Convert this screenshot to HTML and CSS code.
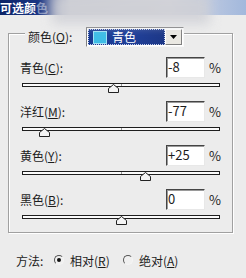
FILE: index.html
```html
<!DOCTYPE html>
<html>
<head>
<meta charset="utf-8">
<link rel="stylesheet" href="styles.css">
</head>
<body>
<div class="win">
  <div class="title">
    <span class="title-text">可选颜<span class="fade">色</span></span>
    <div class="blur"></div>
  </div>
  <div class="group">
    <div class="group-head">
      <span class="legend">颜色(<u>O</u>):</span>
      <div class="combo">
        <div class="combo-sel"><span class="swatch"></span><span class="combo-text">青色</span></div>
        <div class="combo-btn"><svg width="7" height="4" viewBox="0 0 7 4"><path d="M0 0h7L3.5 4z" fill="#000"/></svg></div>
      </div>
    </div>

    <div class="row first"><span class="label">青色(<u>C</u>):</span><span class="input">-8</span><span class="pct">%</span></div>
    <div class="slider"><div class="track"><span class="tick"></span></div><svg class="thumb" style="left:86px" width="11" height="9" viewBox="0 0 11 9"><path d="M0.5 8.5V4.5L5.5 0.5L10.5 4.5V8.5Z" fill="#f4f4f4" stroke="#222"/></svg></div>

    <div class="row"><span class="label">洋红(<u>M</u>):</span><span class="input">-77</span><span class="pct">%</span></div>
    <div class="slider"><div class="track"><span class="tick"></span></div><svg class="thumb" style="left:17px" width="11" height="9" viewBox="0 0 11 9"><path d="M0.5 8.5V4.5L5.5 0.5L10.5 4.5V8.5Z" fill="#f4f4f4" stroke="#222"/></svg></div>

    <div class="row"><span class="label">黄色(<u>Y</u>):</span><span class="input">+25</span><span class="pct">%</span></div>
    <div class="slider"><div class="track"><span class="tick"></span></div><svg class="thumb" style="left:118px" width="11" height="9" viewBox="0 0 11 9"><path d="M0.5 8.5V4.5L5.5 0.5L10.5 4.5V8.5Z" fill="#f4f4f4" stroke="#222"/></svg></div>

    <div class="row"><span class="label">黑色(<u>B</u>):</span><span class="input">0</span><span class="pct">%</span></div>
    <div class="slider"><div class="track"><span class="tick"></span></div><svg class="thumb" style="left:94px" width="11" height="9" viewBox="0 0 11 9"><path d="M0.5 8.5V4.5L5.5 0.5L10.5 4.5V8.5Z" fill="#f4f4f4" stroke="#222"/></svg></div>
  </div>

  <div class="method">
    <span class="m-label">方法:</span>
    <span class="radio checked"></span><span class="r-text">相对(<u>R</u>)</span>
    <span class="radio"></span><span class="r-text">绝对(<u>A</u>)</span>
  </div>
</div>
</body>
</html>
```
FILE: styles.css
```css
html, body {
  margin: 0;
  padding: 0;
  background: #ececec;
}
body {
  font-family: "Noto Sans CJK SC", "Noto Sans", sans-serif;
  font-size: 12px;
  color: #1c1c1c;
}
.win {
  width: 246px;
  height: 278px;
  overflow: hidden;
  background: #ececec;
}
u {
  text-decoration: underline;
  text-underline-offset: 1px;
}

/* title */
.title {
  position: relative;
  height: 15px;
  background: linear-gradient(to right, #0c2467 0, #1a3584 38px, #c9cad2 70px, #d9d9de 170px, #b8c6e0 212px, #a2b8dc 246px);
}
.title-text {
  display: block;
  line-height: 15px;
  font-size: 12px;
  font-weight: bold;
  color: #fff;
}
.fade {
  color: rgba(255,255,255,0.45);
}
.blur {
  position: absolute;
  left: 52px;
  top: -6px;
  width: 158px;
  height: 30px;
  background: #cfd0d6;
  filter: blur(6px);
  opacity: 0.85;
}

/* group */
.group {
  box-sizing: border-box;
  margin: 18px 0 0 8px;
  width: 225px;
  height: 200px;
  border: 1px solid #a0a0a0;
  box-shadow: 1px 1px 0 #fff, inset 1px 1px 0 #fff;
}
.group-head {
  display: flex;
  align-items: center;
  height: 20px;
  margin-top: -7px;
  padding-left: 16px;
}
.legend {
  box-sizing: border-box;
  width: 61px;
  padding-left: 3px;
  background: #ececec;
  line-height: 14px;
  white-space: nowrap;
}
.combo {
  box-sizing: border-box;
  display: flex;
  width: 98px;
  height: 20px;
  border: 1px solid;
  border-color: #808080 #f8f8f8 #f8f8f8 #808080;
  background: #fff;
  padding: 1px;
}
.combo-sel {
  flex: 1;
  display: flex;
  align-items: center;
  background: linear-gradient(to right, #183a92, #203f98 60%, #1c3786);
  outline: 1px dotted #c8d0e8;
  outline-offset: -1px;
}
.swatch {
  box-sizing: border-box;
  width: 14px;
  height: 13px;
  margin-left: 5px;
  background: #3fbde6;
  border: 1px solid #9fe0f4;
}
.combo-text {
  margin-left: 5px;
  color: #fff;
  line-height: 14px;
}
.combo-btn {
  box-sizing: border-box;
  width: 17px;
  display: flex;
  align-items: center;
  justify-content: center;
  background: #eae8e2;
  border: 1px solid;
  border-color: #fff #808080 #808080 #fff;
}

/* rows */
.row {
  display: flex;
  align-items: center;
  height: 21px;
  margin-top: 8px;
  padding: 0 11px 0 11px;
}
.row.first {
  margin-top: 10px;
}
.label {
  flex: 1;
  white-space: nowrap;
}
.input {
  box-sizing: border-box;
  width: 39px;
  height: 21px;
  padding-left: 1px;
  line-height: 18px;
  background: #fff;
  border: 1px solid;
  border-color: #444 #e8e8e8 #e8e8e8 #444;
  box-shadow: inset 1px 1px 0 #9a9a9a;
  font-size: 13px;
}
.pct {
  width: 12px;
  margin-left: 4px;
  font-size: 13px;
}

/* slider */
.slider {
  position: relative;
  height: 10px;
  margin: 5px 0 0 13px;
  width: 198px;
}
.track {
  position: relative;
  box-sizing: border-box;
  margin-top: 4px;
  height: 4px;
  border: 1px solid #1e1e1e;
  background: #fbfbfb;
}
.tick {
  position: absolute;
  left: 98px;
  top: 0;
  width: 1px;
  height: 2px;
  background: #9a9a9a;
}
.thumb {
  position: absolute;
  top: 1px;
}

/* method */
.method {
  display: flex;
  align-items: center;
  height: 14px;
  margin-top: 20px;
  padding-left: 16px;
}
.m-label {
  width: 38px;
}
.radio {
  box-sizing: border-box;
  position: relative;
  width: 10px;
  height: 10px;
  border-radius: 50%;
  border: 1px solid;
  border-color: #555 #f4f4f4 #f4f4f4 #555;
  background: #f0f0f0;
  margin-right: 6px;
}
.radio.checked::after {
  content: "";
  position: absolute;
  left: 2px;
  top: 2px;
  width: 4px;
  height: 4px;
  border-radius: 50%;
  background: #111;
}
.r-text {
  width: 53px;
  white-space: nowrap;
}
```
